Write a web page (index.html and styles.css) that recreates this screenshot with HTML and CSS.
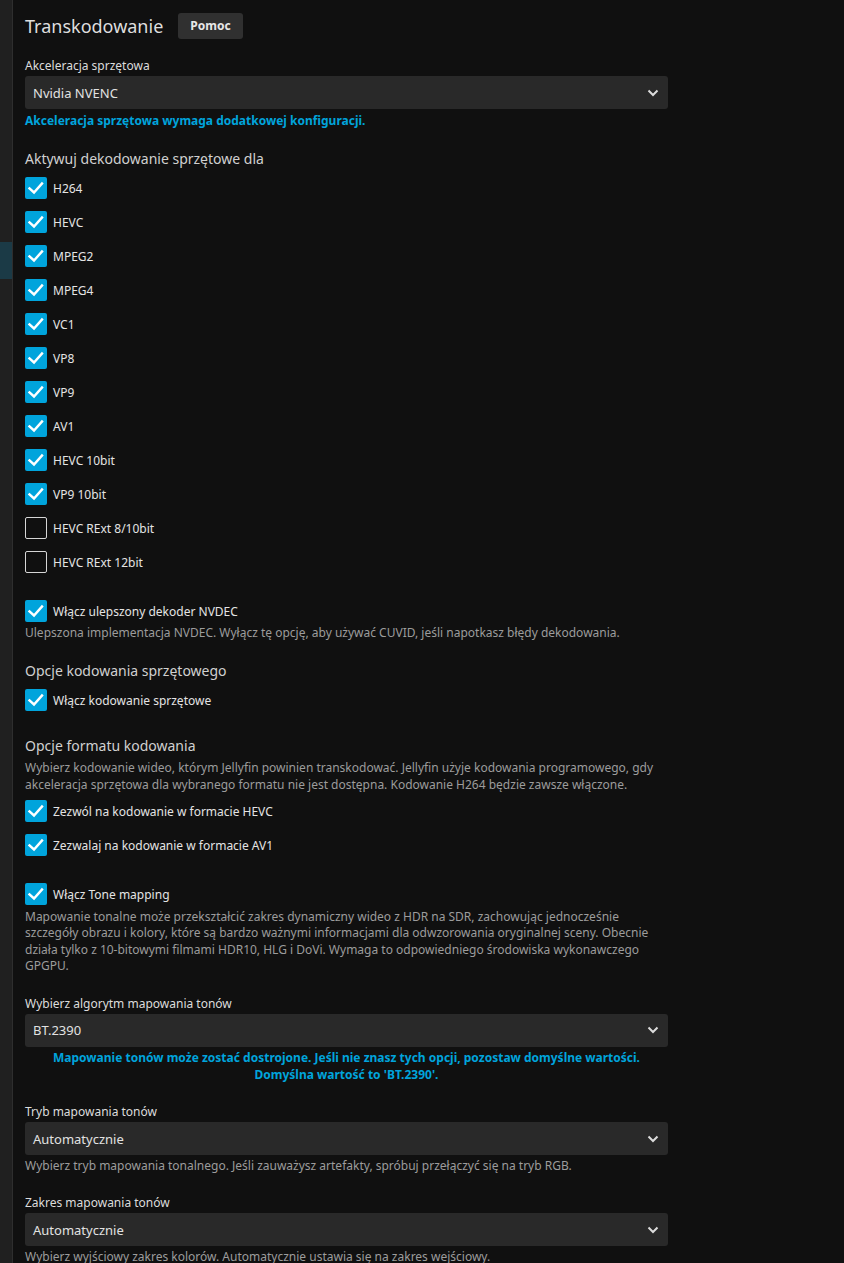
FILE: index.html
```html
<!DOCTYPE html>
<html lang="pl">
<head>
<meta charset="utf-8">
<title>Transkodowanie</title>
<link rel="stylesheet" href="styles.css">
</head>
<body>
<div class="layout">
  <nav class="sidebar">
    <div class="nav-spacer"></div>
    <div class="nav-item active"></div>
  </nav>
  <main class="content">
    <div class="page-header">
      <h1 class="page-title">Transkodowanie</h1>
      <button class="btn-help">Pomoc</button>
    </div>

    <label class="field-label">Akceleracja sprzętowa</label>
    <div class="select"><span>Nvidia NVENC</span><svg class="chev" viewBox="0 0 12 8" width="12" height="8"><polyline points="1.5,1.5 6,6 10.5,1.5"/></svg></div>
    <div class="info-link">Akceleracja sprzętowa wymaga dodatkowej konfiguracji.</div>

    <h2 class="section-heading mt-decode">Aktywuj dekodowanie sprzętowe dla</h2>
    <div class="check-list">
      <div class="check-row"><span class="box checked"><svg viewBox="0 0 22 22"><polyline points="4.5,11.5 9,15.5 17,6.5"/></svg></span><span class="check-label">H264</span></div>
      <div class="check-row"><span class="box checked"><svg viewBox="0 0 22 22"><polyline points="4.5,11.5 9,15.5 17,6.5"/></svg></span><span class="check-label">HEVC</span></div>
      <div class="check-row"><span class="box checked"><svg viewBox="0 0 22 22"><polyline points="4.5,11.5 9,15.5 17,6.5"/></svg></span><span class="check-label">MPEG2</span></div>
      <div class="check-row"><span class="box checked"><svg viewBox="0 0 22 22"><polyline points="4.5,11.5 9,15.5 17,6.5"/></svg></span><span class="check-label">MPEG4</span></div>
      <div class="check-row"><span class="box checked"><svg viewBox="0 0 22 22"><polyline points="4.5,11.5 9,15.5 17,6.5"/></svg></span><span class="check-label">VC1</span></div>
      <div class="check-row"><span class="box checked"><svg viewBox="0 0 22 22"><polyline points="4.5,11.5 9,15.5 17,6.5"/></svg></span><span class="check-label">VP8</span></div>
      <div class="check-row"><span class="box checked"><svg viewBox="0 0 22 22"><polyline points="4.5,11.5 9,15.5 17,6.5"/></svg></span><span class="check-label">VP9</span></div>
      <div class="check-row"><span class="box checked"><svg viewBox="0 0 22 22"><polyline points="4.5,11.5 9,15.5 17,6.5"/></svg></span><span class="check-label">AV1</span></div>
      <div class="check-row"><span class="box checked"><svg viewBox="0 0 22 22"><polyline points="4.5,11.5 9,15.5 17,6.5"/></svg></span><span class="check-label">HEVC 10bit</span></div>
      <div class="check-row"><span class="box checked"><svg viewBox="0 0 22 22"><polyline points="4.5,11.5 9,15.5 17,6.5"/></svg></span><span class="check-label">VP9 10bit</span></div>
      <div class="check-row"><span class="box"></span><span class="check-label">HEVC RExt 8/10bit</span></div>
      <div class="check-row"><span class="box"></span><span class="check-label">HEVC RExt 12bit</span></div>
    </div>

    <div class="check-row mt-option"><span class="box checked"><svg viewBox="0 0 22 22"><polyline points="4.5,11.5 9,15.5 17,6.5"/></svg></span><span class="check-label">Włącz ulepszony dekoder NVDEC</span></div>
    <p class="desc mt-desc">Ulepszona implementacja NVDEC. Wyłącz tę opcję, aby używać CUVID, jeśli napotkasz błędy dekodowania.</p>

    <h2 class="section-heading mt-section">Opcje kodowania sprzętowego</h2>
    <div class="check-row mt-check"><span class="box checked"><svg viewBox="0 0 22 22"><polyline points="4.5,11.5 9,15.5 17,6.5"/></svg></span><span class="check-label">Włącz kodowanie sprzętowe</span></div>

    <h2 class="section-heading mt-section2">Opcje formatu kodowania</h2>
    <p class="desc mt-desc">Wybierz kodowanie wideo, którym Jellyfin powinien transkodować. Jellyfin użyje kodowania programowego, gdy akceleracja sprzętowa dla wybranego formatu nie jest dostępna. Kodowanie H264 będzie zawsze włączone.</p>
    <div class="check-list mt-check">
      <div class="check-row"><span class="box checked"><svg viewBox="0 0 22 22"><polyline points="4.5,11.5 9,15.5 17,6.5"/></svg></span><span class="check-label">Zezwól na kodowanie w formacie HEVC</span></div>
      <div class="check-row"><span class="box checked"><svg viewBox="0 0 22 22"><polyline points="4.5,11.5 9,15.5 17,6.5"/></svg></span><span class="check-label">Zezwalaj na kodowanie w formacie AV1</span></div>
    </div>

    <div class="check-row mt-option"><span class="box checked"><svg viewBox="0 0 22 22"><polyline points="4.5,11.5 9,15.5 17,6.5"/></svg></span><span class="check-label">Włącz Tone mapping</span></div>
    <p class="desc desc-tight mt-desc-tone">Mapowanie tonalne może przekształcić zakres dynamiczny wideo z HDR na SDR, zachowując jednocześnie szczegóły obrazu i kolory, które są bardzo ważnymi informacjami dla odwzorowania oryginalnej sceny. Obecnie działa tylko z 10-bitowymi filmami HDR10, HLG i DoVi. Wymaga to odpowiedniego środowiska wykonawczego GPGPU.</p>

    <label class="field-label mt-field">Wybierz algorytm mapowania tonów</label>
    <div class="select"><span>BT.2390</span><svg class="chev" viewBox="0 0 12 8" width="12" height="8"><polyline points="1.5,1.5 6,6 10.5,1.5"/></svg></div>
    <div class="info-center">Mapowanie tonów może zostać dostrojone. Jeśli nie znasz tych opcji, pozostaw domyślne wartości. Domyślna wartość to 'BT.2390'.</div>

    <label class="field-label mt-field">Tryb mapowania tonów</label>
    <div class="select"><span>Automatycznie</span><svg class="chev" viewBox="0 0 12 8" width="12" height="8"><polyline points="1.5,1.5 6,6 10.5,1.5"/></svg></div>
    <p class="desc mt-desc">Wybierz tryb mapowania tonalnego. Jeśli zauważysz artefakty, spróbuj przełączyć się na tryb RGB.</p>

    <label class="field-label mt-field">Zakres mapowania tonów</label>
    <div class="select"><span>Automatycznie</span><svg class="chev" viewBox="0 0 12 8" width="12" height="8"><polyline points="1.5,1.5 6,6 10.5,1.5"/></svg></div>
    <p class="desc mt-desc">Wybierz wyjściowy zakres kolorów. Automatycznie ustawia się na zakres wejściowy.</p>
  </main>
</div>
</body>
</html>
```

FILE: styles.css
```css
html, body {
  margin: 0;
  padding: 0;
  background: #101010;
  color: #dcdcdc;
  font-family: "Noto Sans", "Open Sans", sans-serif;
  overflow: hidden;
}

.layout {
  display: flex;
  min-height: 100vh;
}

.sidebar {
  width: 12px;
  flex: none;
  background: #202020;
  border-right: 1px solid #2e2e2e;
  display: flex;
  flex-direction: column;
}

.nav-spacer {
  height: 242px;
}

.nav-item {
  height: 37px;
}

.nav-item.active {
  background: #1b3a46;
}

.content {
  width: 643px;
  padding: 0 12px;
  display: flex;
  flex-direction: column;
}

.page-header {
  display: flex;
  align-items: center;
  gap: 15px;
  margin-top: 13px;
  height: 26px;
  margin-bottom: 18px;
}

.page-title {
  margin: 0;
  font-size: 18px;
  font-weight: 400;
  line-height: 26px;
  color: #dedede;
}

.btn-help {
  height: 26px;
  padding: 0 12px;
  border: 0;
  border-radius: 3px;
  background: #303030;
  color: #e8e8e8;
  font-family: inherit;
  font-size: 12px;
  font-weight: 700;
  line-height: 26px;
}

.field-label {
  display: block;
  font-size: 12px;
  line-height: 18px;
  color: #dcdcdc;
  margin-bottom: 1px;
}

.select {
  height: 33px;
  background: #292929;
  border-radius: 3px;
  display: flex;
  align-items: center;
  justify-content: space-between;
  padding: 0 9px 0 8px;
  font-size: 13px;
  color: #e2e2e2;
}

.chev {
  width: 12px;
  height: 8px;
  fill: none;
  stroke: #dcdcdc;
  stroke-width: 2;
}

.info-link {
  margin-top: 4px;
  font-size: 12px;
  line-height: 16px;
  font-weight: 700;
  color: #00a4dc;
}

.info-center {
  margin-top: 2.5px;
  font-size: 12px;
  line-height: 17px;
  font-weight: 700;
  color: #00a4dc;
  text-align: center;
  padding: 0 20px;
}

.section-heading {
  margin: 0;
  font-size: 14px;
  font-weight: 400;
  line-height: 22px;
  color: #d0d0d0;
}

.mt-decode { margin-top: 19px; }
.mt-section { margin-top: 19px; }
.mt-section2 { margin-top: 24px; }

.check-list {
  display: flex;
  flex-direction: column;
  gap: 12px;
  margin-top: 7px;
}

.check-row {
  display: flex;
  align-items: center;
  gap: 6px;
  height: 22px;
}

.mt-option { margin-top: 27px; }
.mt-check { margin-top: 7px; }
.mt-field { margin-top: 20px; }

.box {
  width: 22px;
  height: 22px;
  box-sizing: border-box;
  border: 1.5px solid #d6d6d6;
  border-radius: 2px;
  flex: none;
  display: flex;
}

.box.checked {
  background: #00a4dc;
  border: 0;
}

.box svg {
  width: 22px;
  height: 22px;
  fill: none;
  stroke: #fff;
  stroke-width: 2.4;
  stroke-linecap: square;
}

.check-label {
  font-size: 12px;
  line-height: 18px;
  padding-top: 2px;
  color: #e4e4e4;
}

.desc {
  margin: 0;
  font-size: 12px;
  line-height: 17px;
  color: #9c9c9c;
}

.desc-tight {
  line-height: 16.4px;
}

.mt-desc { margin-top: 2px; }
.mt-desc-tone { margin-top: 4px; }
```
